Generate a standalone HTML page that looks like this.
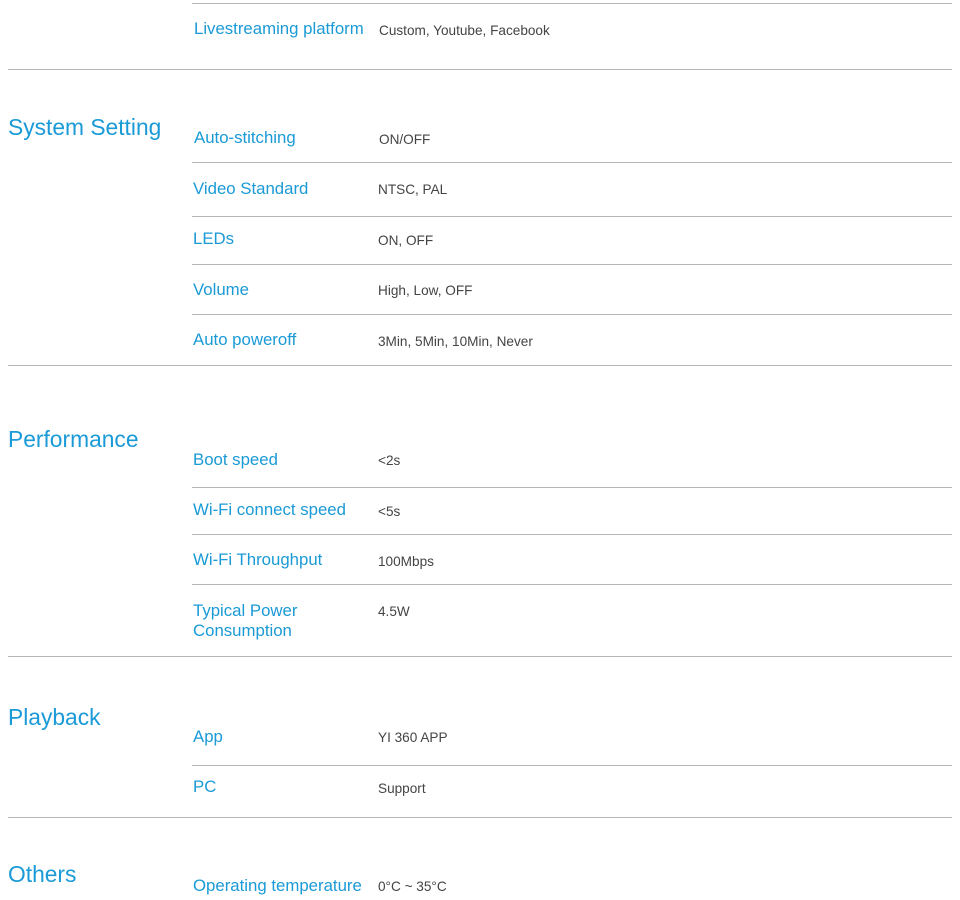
<!DOCTYPE html>
<html><head><style>
body{margin:0;width:960px;height:900px;background:#fff;position:relative;overflow:hidden;font-family:"Liberation Sans",Arial,sans-serif}
.h{position:absolute;left:8px;font-size:22.8px;line-height:28px;color:#1a9ad6}
.l{position:absolute;left:193px;font-size:16.8px;line-height:20px;color:#1a9ad6}
.v{position:absolute;left:378px;font-size:13.6px;line-height:18px;color:#444}
.ln{position:absolute;height:1px;background:#b5b5b5;right:8px}
.s{left:192px}.f{left:8px}
</style></head><body>
<div class="ln s" style="top:3px"></div>
<div class="l" style="top:19px;left:194px">Livestreaming platform</div><div class="v" style="top:22px;left:379px">Custom, Youtube, Facebook</div>
<div class="ln f" style="top:69px"></div>

<div class="h" style="top:113px">System Setting</div>
<div class="l" style="top:128px;left:194px">Auto-stitching</div><div class="v" style="top:131px;left:379px">ON/OFF</div>
<div class="ln s" style="top:162px"></div>
<div class="l" style="top:179px">Video Standard</div><div class="v" style="top:181px">NTSC, PAL</div>
<div class="ln s" style="top:216px"></div>
<div class="l" style="top:229px">LEDs</div><div class="v" style="top:232px">ON, OFF</div>
<div class="ln s" style="top:264px"></div>
<div class="l" style="top:280px">Volume</div><div class="v" style="top:282px">High, Low, OFF</div>
<div class="ln s" style="top:314px"></div>
<div class="l" style="top:330px">Auto poweroff</div><div class="v" style="top:333px">3Min, 5Min, 10Min, Never</div>
<div class="ln f" style="top:365px"></div>

<div class="h" style="top:425px">Performance</div>
<div class="l" style="top:450px">Boot speed</div><div class="v" style="top:452px">&lt;2s</div>
<div class="ln s" style="top:487px"></div>
<div class="l" style="top:500px">Wi-Fi connect speed</div><div class="v" style="top:503px">&lt;5s</div>
<div class="ln s" style="top:534px"></div>
<div class="l" style="top:550px">Wi-Fi Throughput</div><div class="v" style="top:553px">100Mbps</div>
<div class="ln s" style="top:584px"></div>
<div class="l" style="top:601px">Typical Power<br>Consumption</div><div class="v" style="top:603px">4.5W</div>
<div class="ln f" style="top:656px"></div>

<div class="h" style="top:703px">Playback</div>
<div class="l" style="top:727px">App</div><div class="v" style="top:729px">YI 360 APP</div>
<div class="ln s" style="top:765px"></div>
<div class="l" style="top:777px">PC</div><div class="v" style="top:780px">Support</div>
<div class="ln f" style="top:817px"></div>

<div class="h" style="top:860px">Others</div>
<div class="l" style="top:876px">Operating temperature</div><div class="v" style="top:878px">0°C ~ 35°C</div>
</body></html>
